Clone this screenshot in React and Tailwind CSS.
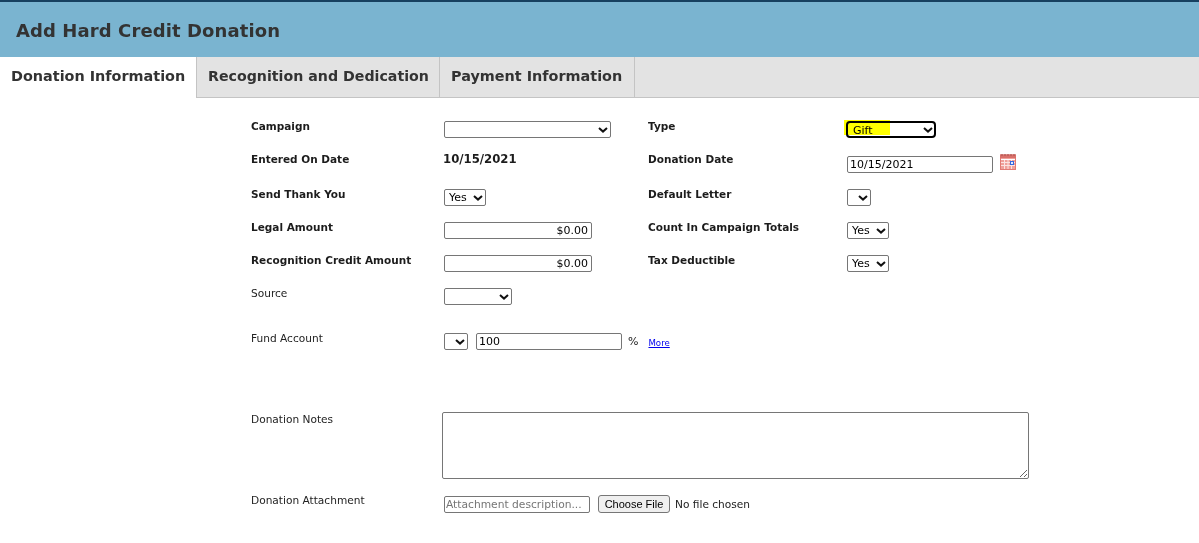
import React from 'react';

const labelBold = 'text-[10.5px] leading-[12px] font-bold text-[#1c1c1c] -mt-[1px]';
const labelPlain = 'text-[10.6px] leading-[14px] text-[#222]';
const field = 'h-[17px] border border-[#767676] rounded-[2px] bg-white text-[11px] text-black outline-none';

const Chevron = () => (
  <svg width="10" height="6" viewBox="0 0 10 6" className="absolute right-[3px] top-[6px] pointer-events-none">
    <path d="M1 1l4 3.6L9 1" fill="none" stroke="#111" strokeWidth="2" />
  </svg>
);

const Select = ({ width, value, options = [''] }) => (
  <div className={`relative block ${width}`}>
    <select defaultValue={value} className={`${field} w-full block appearance-none pl-[4px]`}>
      {options.map(o => <option key={o}>{o}</option>)}
    </select>
    <Chevron />
  </div>
);

const Money = () => (
  <input readOnly value="$0.00" className={`${field} w-[148px] px-[3px] text-right`} />
);

const CalendarIcon = () => (
  <svg width="16" height="16" viewBox="0 0 16 16" className="ml-[7px] -mt-[2px] shrink-0">
    <rect x="0.5" y="1" width="15" height="14.5" fill="#f0a09a" stroke="#e07a74" />
    <rect x="0" y="0.5" width="16" height="3.5" fill="#d9706a" />
    <path d="M2 0v2M5 0v2M8 0v2M11 0v2M14 0v2" stroke="#a9504c" strokeWidth="1" />
    <path d="M1 5.5h14" stroke="#fff" />
    <path d="M1 8.5h14M1 11.5h14M4.5 6v9M8 6v9M11.5 6v9" stroke="#fbe3e1" strokeWidth="1" />
    <rect x="10.5" y="7.5" width="3" height="3" fill="#dfe9ff" stroke="#3468e0" />
  </svg>
);

const Row = ({ label, className = 'h-[33px]', children }) => (
  <div className={`flex ${className}`}>
    <div className={`w-[193px] -mt-[2px] ${labelPlain}`}>{label}</div>
    <div className="flex items-start">{children}</div>
  </div>
);

const Pair = ({ left, leftLabel, rightLabel, right, className = 'h-[33px]' }) => (
  <div className={`flex ${className}`}>
    <div className={`w-[193px] ${labelBold}`}>{leftLabel}</div>
    <div className="w-[204px] flex items-start">{left}</div>
    <div className={`w-[199px] ${labelBold}`}>{rightLabel}</div>
    <div className="flex items-start">{right}</div>
  </div>
);

export default function App() {
  return (
    <div className="w-[1199px] h-[543px] overflow-hidden bg-white font-['DejaVu_Sans',Verdana,sans-serif]">
      {/* Titre */}
      <div className="h-[57px] bg-[#7ab4d0] border-t-2 border-[#17405f] flex items-center pl-[16px] pt-[1px]">
        <h1 className="text-[18px] font-bold text-[#333] tracking-[0.1px]">Add Hard Credit Donation</h1>
      </div>

      {/* Onglets */}
      <div className="h-[41px] flex bg-[#e3e3e3] border-b border-[#c4c4c4] font-bold text-[#333]">
        <div className="w-[197px] -mb-px bg-white border-r border-[#c4c4c4] pl-[11px] pt-[10px] text-[14.4px] leading-[18px]">Donation Information</div>
        <div className="w-[243px] border-r border-[#c4c4c4] pl-[11px] pt-[10px] text-[14.2px] leading-[18px]">Recognition and Dedication</div>
        <div className="w-[195px] border-r border-[#c4c4c4] pl-[11px] pt-[10px] text-[14.4px] leading-[18px]">Payment Information</div>
      </div>

      {/* Formulaire */}
      <div className="pl-[251px] pt-[23px]">
        <Pair
          leftLabel="Campaign"
          left={<Select width="w-[167px]" />}
          rightLabel="Type"
          right={
            <div className="relative">
              <div className="relative w-[90px] -ml-[1px]">
                <select defaultValue="Gift" className="h-[17px] w-full block appearance-none border-2 border-black rounded-[4px] bg-white text-[11px] text-black pl-[5px] outline-none">
                  <option>Gift</option>
                </select>
                <Chevron />
              </div>
              <span className="absolute -left-[3px] -top-[1px] w-[46px] h-[15px] bg-[#ffff00] mix-blend-multiply" />
            </div>
          }
        />
        <Pair
          leftLabel="Entered On Date"
          left={<span className="text-[11.7px] leading-[12px] font-bold text-[#1c1c1c] -ml-[1px] -mt-[1px]">10/15/2021</span>}
          rightLabel="Donation Date"
          right={
            <div className="flex items-start pt-[2px]">
              <input readOnly value="10/15/2021" className={`${field} w-[146px] px-[2px]`} />
              <CalendarIcon />
            </div>
          }
          className="h-[35px]"
        />
        <Pair
          leftLabel="Send Thank You"
          left={<Select width="w-[42px]" value="Yes" options={['Yes', 'No']} />}
          rightLabel="Default Letter"
          right={<Select width="w-[24px]" />}
        />
        <Pair
          leftLabel="Legal Amount"
          left={<Money />}
          rightLabel="Count In Campaign Totals"
          right={<Select width="w-[42px]" value="Yes" options={['Yes', 'No']} />}
        />
        <Pair
          leftLabel="Recognition Credit Amount"
          left={<Money />}
          rightLabel="Tax Deductible"
          right={<Select width="w-[42px]" value="Yes" options={['Yes', 'No']} />}
        />
        <Row label="Source" className="h-[45px]">
          <Select width="w-[68px]" />
        </Row>
        <Row label="Fund Account" className="h-[79px]">
          <Select width="w-[24px]" />
          <input readOnly value="100" className={`${field} w-[146px] ml-[8px] px-[2px]`} />
          <span className="ml-[6px] text-[11px] leading-[17px] text-[#222]">%</span>
          <a href="#" className="ml-[10px] mt-[1px] text-[8.6px] leading-[19px] text-[#0000ee] underline">More</a>
        </Row>
        <div className="flex h-[81px]">
          <div className={`w-[191px] ${labelPlain}`}>Donation Notes</div>
          <textarea className="w-[587px] h-[67px] border border-[#767676] rounded-[2px] bg-white outline-none" />
        </div>
        <div className="flex">
          <div className={`w-[193px] ${labelPlain}`}>Donation Attachment</div>
          <div className="flex items-center mt-[2px]">
            <input placeholder="Attachment description..." className="h-[17px] w-[146px] border border-[#767676] rounded-[2px] bg-white text-[10.7px] pl-[1px] outline-none placeholder:text-[#757575]" />
            <button className="ml-[8px] h-[18px] w-[72px] border border-[#767676] rounded-[3px] bg-[#efefef] text-[11px] leading-none text-black font-['Liberation_Sans',Arial,sans-serif]">Choose File</button>
            <span className="ml-[5px] mt-[1px] text-[10.6px] text-[#222]">No file chosen</span>
          </div>
        </div>
      </div>
    </div>
  );
}
